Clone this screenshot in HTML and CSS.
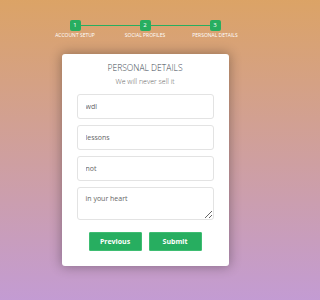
FILE: index.html
```html
<!DOCTYPE html>
<html>
<head>
<meta charset="utf-8">
<link rel="stylesheet" href="styles.css">
</head>
<body>
<div class="wrap">
  <ul class="progress">
    <li><span class="step">1</span><span class="label">Account Setup</span></li>
    <li><span class="step">2</span><span class="label">Social Profiles</span></li>
    <li><span class="step">3</span><span class="label">Personal Details</span></li>
  </ul>
  <form class="card">
    <h2 class="title">Personal Details</h2>
    <h3 class="subtitle">We will never sell it</h3>
    <input class="field" type="text" value="wdl">
    <input class="field" type="text" value="lessons">
    <input class="field" type="text" value="not">
    <textarea class="field area">in your heart</textarea>
    <div class="actions">
      <button type="button" class="btn">Previous</button>
      <button type="button" class="btn">Submit</button>
    </div>
  </form>
</div>
</body>
</html>
```
FILE: styles.css
```css
html {
  height: 100%;
  background: #fff;
}
body {
  margin: 0;
  min-height: 100%;
  background: linear-gradient(rgba(196, 102, 0, 0.6), rgba(155, 89, 182, 0.6));
  font-family: "Open Sans", "Noto Sans", sans-serif;
}
.wrap {
  width: 210px;
  margin-left: 40px;
  padding-top: 20px;
  padding-bottom: 35px;
}
.progress {
  display: flex;
  list-style: none;
  margin: 0;
  padding: 0;
}
.progress li {
  flex: 1;
  position: relative;
  display: flex;
  flex-direction: column;
  align-items: center;
  color: #fff;
  text-transform: uppercase;
  font-size: 5px;
  line-height: 6px;
}
.progress li + li::after {
  content: "";
  position: absolute;
  top: 5px;
  left: -50%;
  width: 100%;
  height: 1px;
  background: #27ae60;
}
.step {
  position: relative;
  z-index: 1;
  width: 11px;
  height: 11px;
  border-radius: 2px;
  background: #27ae60;
  color: #fff;
  font-size: 6px;
  line-height: 11px;
  text-align: center;
  margin-bottom: 1px;
}
.label {
  white-space: nowrap;
}
.card {
  box-sizing: border-box;
  width: 167px;
  margin: 16px auto 0;
  background: #fff;
  border-radius: 3px;
  box-shadow: 0 0 12px 1px rgba(0, 0, 0, 0.3);
  padding: 9px 15px 15px;
  display: flex;
  flex-direction: column;
}
.title {
  margin: 0;
  font-size: 8.5px;
  line-height: 10px;
  font-weight: 300;
  text-transform: uppercase;
  color: #3d4852;
  text-align: center;
}
.subtitle {
  margin: 4px 0 8px;
  font-size: 7px;
  line-height: 9px;
  font-weight: 300;
  color: #666;
  text-align: center;
}
.field {
  box-sizing: border-box;
  width: 100%;
  height: 25px;
  margin: 0 0 6px;
  padding: 0 8px;
  border: 1px solid #e3e3e3;
  border-radius: 3px;
  font-family: inherit;
  font-size: 7px;
  color: #666;
  outline: none;
}
.area {
  height: 33px;
  padding: 6px 8px;
  margin-bottom: 12px;
  display: block;
  resize: vertical;
}
.actions {
  display: flex;
  justify-content: center;
  gap: 7px;
}
.btn {
  width: 53px;
  height: 19px;
  padding: 0;
  border: 1px solid #3ebd72;
  border-radius: 1px;
  background: #27ae60;
  color: #fff;
  font-family: inherit;
  font-weight: bold;
  font-size: 7px;
}
```
